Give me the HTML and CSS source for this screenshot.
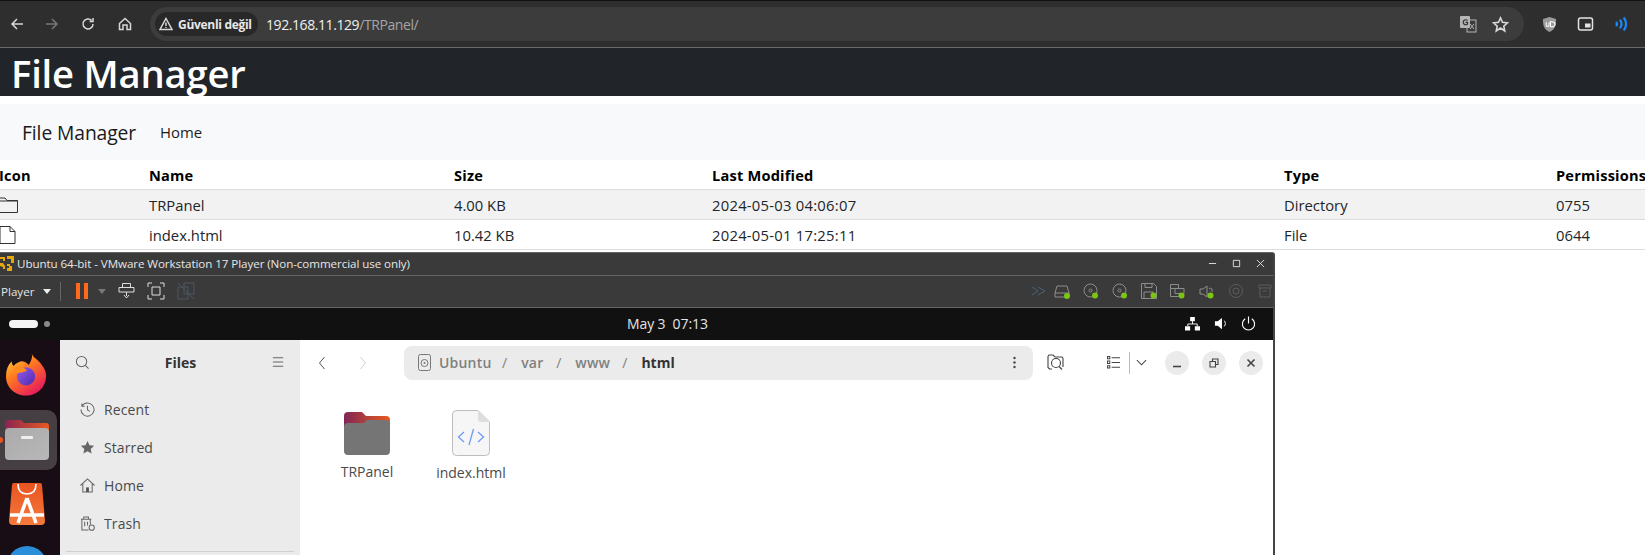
FILE: index.html
```html
<!DOCTYPE html>
<html lang="tr">
<head>
<meta charset="utf-8">
<title>File Manager</title>
<link rel="stylesheet" href="styles.css">
</head>
<body>
<div class="screen">
  <header class="chrome">
    <svg class="nav-icon first" viewBox="0 0 16 16"><path d="M14 8H3M8 3 3 8l5 5" class="st-light"/></svg>
    <svg class="nav-icon gap-a" viewBox="0 0 16 16"><path d="M2 8h11M8 3l5 5-5 5" class="st-dim"/></svg>
    <svg class="nav-icon gap-b" viewBox="0 0 16 16"><path d="M13 8a5 5 0 1 1-1.500-3.600M13 2v3.400H9.600" class="st-light"/></svg>
    <svg class="nav-icon gap-c" viewBox="0 0 16 16"><path d="M2.500 7.500 8 2.500l5.500 5v6H10V9H6v4.500H2.500z" class="st-light"/></svg>
    <div class="omnibox">
      <div class="chip">
        <svg class="warn" viewBox="0 0 14 14"><path d="M7 1.500 13 12.500H1zM7 5.500v3.500M7 10v1" class="st-light"/></svg>
        <span>Güvenli değil</span>
      </div>
      <div class="url"><span class="url-host">192.168.11.129</span>/TRPanel/</div>
      <svg class="translate" viewBox="0 0 18 18"><rect x="8" y="5" width="9" height="12" fill="none" stroke="#b5b5b5"/><rect x="1" y="1" width="10" height="12" rx="1" fill="#b5b5b5"/><path d="M8.500 5.500A2.500 2.500 0 1 0 8.500 9V7.300H6.500" fill="none" stroke="#333" stroke-width="1.200"/><path d="m11 9 4 5m0-5-4 5" stroke="#b5b5b5"/></svg>
      <svg class="star" viewBox="0 0 16 16"><path d="m8 1.800 1.900 4.200 4.600.5-3.400 3.100.9 4.500L8 11.300l-4 2.800.9-4.500L1.500 6.500 6.100 6z" class="st-light"/></svg>
    </div>
    <svg class="ext ublock" viewBox="0 0 16 18"><path d="M8 1 15 3c0 7-1 11-7 14C2 14 1 10 1 3z" fill="#9a9a9a"/><path d="M4.500 6.500v3a1.500 1.500 0 0 0 3 0v-3M9 6h1.500a2.500 2 0 0 1 0 5.500H9z" fill="none" stroke="#fff" stroke-width="1.100"/></svg>
    <svg class="ext pip" viewBox="0 0 16 16"><rect x="1" y="2" width="14" height="12" rx="2" fill="none" stroke="#e3e3e3" stroke-width="1.500"/><rect x="7.500" y="7.500" width="5.500" height="4" fill="#e3e3e3"/></svg>
    <svg class="ext wifi" viewBox="0 0 14 14"><path d="M2 5c1 1.300 1 2.700 0 4M5.500 3c2 2.500 2 5.500 0 8M9 1c3 3.500 3 8.500 0 12" fill="none" stroke="#1a8cff" stroke-width="2"/></svg>
  </header>

  <div class="banner"><h1>File Manager</h1></div>

  <nav class="navbar">
    <span class="brand">File Manager</span>
    <span class="nav-link">Home</span>
  </nav>

  <table class="files">
    <colgroup><col class="c1"><col class="c2"><col class="c3"><col class="c4"><col class="c5"><col class="c6"></colgroup>
    <thead>
      <tr><th>Icon</th><th>Name</th><th>Size</th><th>Last Modified</th><th>Type</th><th>Permissions</th></tr>
    </thead>
    <tbody>
      <tr class="odd">
        <td><svg class="row-icon" viewBox="0 0 20 18"><path d="M-1 2h7l2 2.500h10.500V16.500H-1zM-1 5h19.500" fill="none" stroke="#333" stroke-width="1"/></svg></td>
        <td>TRPanel</td><td>4.00 KB</td><td class="stamp">2024-05-03 04:06:07</td><td>Directory</td><td>0755</td>
      </tr>
      <tr>
        <td><svg class="row-icon" viewBox="0 0 20 18"><path d="M1 .5h10l5 5v12H1zM11 .5v5h5" fill="none" stroke="#333" stroke-width="1"/></svg></td>
        <td>index.html</td><td>10.42 KB</td><td class="stamp">2024-05-01 17:25:11</td><td>File</td><td>0644</td>
      </tr>
    </tbody>
  </table>

  <section class="vm">
    <div class="vm-title">
      <svg class="vm-logo" viewBox="0 0 14 16"><path d="M0 1h5v4H3V3H0zM7 0h7v7h-3V3H7zM0 7h3l2 3v3H3v-2L0 10zM7 8h3v2h2v5H7v-3h2v-2H7z" fill="#e8a80c"/></svg>
      <span class="vm-name">Ubuntu 64-bit - VMware Workstation 17 Player (Non-commercial use only)</span>
      <svg class="win-btn" viewBox="0 0 10 10"><path d="M1 5h8" class="st-win"/></svg>
      <svg class="win-btn" viewBox="0 0 10 10"><path d="M1.500 1.500h7v7h-7z" class="st-win"/></svg>
      <svg class="win-btn" viewBox="0 0 10 10"><path d="m1 1 8 8m0-8-8 8" class="st-win"/></svg>
    </div>
    <div class="vm-tools">
      <span class="player">Player</span>
      <span class="caret light"></span>
      <span class="tool-sep"></span>
      <span class="pause"><i></i><i></i></span>
      <span class="caret dim"></span>
      <svg class="tool t-send" viewBox="0 0 18 18"><path d="M4.500 1.500h8v4h-8zM1 5.500h15v4.500H1zM8.500 10v4M6 13l2.500 3 2.500-3" fill="none" stroke="#ddd" stroke-width="1"/></svg>
      <svg class="tool t-full" viewBox="0 0 18 18"><path d="M1 5V1h4M13 1h4v4M17 13v4h-4M5 17H1v-4M5 5h8v8H5z" fill="none" stroke="#ddd" stroke-width="1"/></svg>
      <svg class="tool t-unity" viewBox="0 0 18 18"><path d="M1 5h10v12H1zM7 1h10v11H7zM1 1l16 16" fill="none" stroke="#4b5660" stroke-width="1"/></svg>
      <svg class="dev d-more" viewBox="0 0 16 10"><path d="m1 1 6 4-6 4M7 1l7 4-7 4" fill="none" stroke="#46627a"/></svg>
      <span class="dev-wrap"><svg class="dev" viewBox="0 0 16 16"><path d="M3 3h10l2 7v4H1v-4zM1 10h14" class="st-dev"/><circle class="led" cx="13" cy="13" r="3"/></svg></span>
      <span class="dev-wrap"><svg class="dev" viewBox="0 0 16 16"><circle cx="7.500" cy="7.500" r="6.500" class="st-dev"/><circle cx="7.500" cy="7.500" r="1.500" class="st-dev"/><circle class="led" cx="12" cy="12.500" r="3"/></svg></span>
      <span class="dev-wrap"><svg class="dev" viewBox="0 0 16 16"><circle cx="7.500" cy="7.500" r="6.500" class="st-dev"/><circle cx="7.500" cy="7.500" r="1.500" class="st-dev"/><circle class="led" cx="12" cy="12.500" r="3"/></svg></span>
      <span class="dev-wrap"><svg class="dev" viewBox="0 0 16 16"><path d="M.5.500h12l3 3v12H.5zM4 .5v4h7v-4M3 15.500V9h9v6.500" class="st-dev"/><circle class="led" cx="12.500" cy="12.500" r="3"/></svg></span>
      <span class="dev-wrap"><svg class="dev" viewBox="0 0 16 16"><path d="M.5 1.500h8v4h-8zM5 5.500h9v5H5zM.5 5.500v8h8" class="st-dev"/><circle class="led" cx="11.500" cy="12.500" r="3"/></svg></span>
      <span class="dev-wrap"><svg class="dev" viewBox="0 0 16 16"><path d="M1 6h3l4-3v11l-4-3H1zM10 6a2 2 0 0 1 3 0v3" class="st-dev"/><circle class="led" cx="11.500" cy="12.500" r="3"/></svg></span>
      <span class="dev-wrap"><svg class="dev" viewBox="0 0 16 16"><circle cx="8" cy="8" r="6.500" class="st-off"/><circle cx="8" cy="8" r="3" class="st-off"/></svg></span>
      <span class="dev-wrap"><svg class="dev" viewBox="0 0 16 16"><path d="M2 2h12v3H2zM3 5v9h10V5M6 8h4" class="st-off"/></svg></span>
    </div>
    <div class="guest-bar">
      <div class="activities"><span class="pill"></span><span class="dot"></span></div>
      <div class="clock">May 3&nbsp; 07:13</div>
      <div class="tray">
        <svg class="tray-icon" viewBox="0 0 16 16"><path d="M5.500 1h5v4.500h-5zM0 11h5.500v4.500H0zM10.500 11H16v4.500h-5.500z" fill="#fff"/><path d="M8 5.500V8.500M3 11V8.500h10V11" fill="none" stroke="#fff"/></svg>
        <svg class="tray-icon vol" viewBox="0 0 16 16"><path d="M1 5.500h3L8.500 2v12L4 10.500H1z" fill="#fff"/><path d="M11 5c1.500 2 1.500 4 0 6" fill="none" stroke="#fff"/></svg>
        <svg class="tray-icon pow" viewBox="0 0 16 16"><path d="M4.500 3a6.500 6.500 0 1 0 7 0M8 .5V8" fill="none" stroke="#fff" stroke-width="1.200"/></svg>
      </div>
    </div>
    <div class="desktop">
      <aside class="dock">
        <svg class="fox" viewBox="0 0 44 44">
          <defs>
            <linearGradient id="foxA" x1="0" y1="0" x2=".7" y2="1"><stop offset="0" stop-color="#ffe040"/><stop offset=".45" stop-color="#ff7a1f"/><stop offset="1" stop-color="#e6195e"/></linearGradient>
            <linearGradient id="foxB" x1="0" y1="0" x2="1" y2="1"><stop offset="0" stop-color="#9a5be8"/><stop offset="1" stop-color="#4a2bb5"/></linearGradient>
          </defs>
          <path d="M27 0c1 4 5 5 9 10 3 4 6 8 6 13 0 12-9 21-21 21C9 44 0 35 0 24 0 17 2 12 6 8c0 3 1 4 2 5 2-3 5-4 8-5 3 0 5 1 8 4 2-4 4-7 3-12z" fill="url(#foxA)"/>
          <circle cx="21" cy="24" r="9.500" fill="url(#foxB)"/>
          <path d="M9 15c5-2 10-1 13 3l-5 2c-4 0-6 1-7 3-1-3-1-5-1-8z" fill="#ff8a1f"/>
        </svg>
        <div class="dock-active">
          <span class="run-dot"></span>
          <svg class="dock-folder" viewBox="0 0 44 40">
            <defs>
              <linearGradient id="tabA" x1="0" y1="0" x2="1" y2="0"><stop offset="0" stop-color="#8c2452"/><stop offset="1" stop-color="#e95a20"/></linearGradient>
              <linearGradient id="bodyA" x1="0" y1="0" x2="1" y2="1"><stop offset="0" stop-color="#aaa"/><stop offset="1" stop-color="#b8b8b8"/></linearGradient>
            </defs>
            <path d="M3 0h13l3 3h22a3 3 0 0 1 3 3v10H0V3a3 3 0 0 1 3-3z" fill="url(#tabA)"/>
            <rect y="8" width="44" height="32" rx="4" fill="url(#bodyA)"/>
            <rect x="16" y="16" width="12" height="3" rx="1" fill="#eee"/>
          </svg>
        </div>
        <svg class="store" viewBox="0 0 36 42">
          <defs><linearGradient id="storeA" x1="0" y1="0" x2="0" y2="1"><stop offset="0" stop-color="#e95420"/><stop offset="1" stop-color="#f47a3c"/></linearGradient></defs>
          <path d="M5 0h26a2 2 0 0 1 2 2l3 36a4 4 0 0 1-4 4H4a4 4 0 0 1-4-4L3 2a2 2 0 0 1 2-2z" fill="url(#storeA)"/>
          <path d="M9 1c0 7 4 10 9 10s9-3 9-10" fill="none" stroke="#fff" stroke-width="1.600"/>
          <path d="M18 15 9 40M18 15l9 25M1 32h34" fill="none" stroke="#fff" stroke-width="3.500"/>
        </svg>
        <div class="dock-blue"></div>
      </aside>
      <aside class="sidebar">
        <div class="side-head">
          <svg class="s-icon" viewBox="0 0 16 16"><circle cx="7" cy="7" r="5.500" class="st-grey"/><path d="m11 11 3.500 3.500" class="st-grey"/></svg>
          <span class="side-title">Files</span>
          <svg class="s-icon" viewBox="0 0 16 16"><path d="M2 3h11M2 7.500h11M2 12h11" class="st-grey"/></svg>
        </div>
        <ul class="places">
          <li><svg class="p-icon" viewBox="0 0 16 16"><path d="M2 4.500A7 7 0 1 1 1 8M2 1.500v3h3M8 4v4.500l2.500 1.500" class="st-grey"/></svg>Recent</li>
          <li><svg class="p-icon" viewBox="0 0 16 16"><path d="m8 1 2.100 4.700 5 .5-3.700 3.300 1 5L8 12l-4.400 2.500 1-5L.9 6.200l5-.5z" fill="#666"/></svg>Starred</li>
          <li><svg class="p-icon" viewBox="0 0 16 16"><path d="M.5 8 8 1l7.500 7M3 6.500v8.500h10V6.500" class="st-grey"/><path d="M6.500 10h3v5h-3z" fill="#555"/></svg>Home</li>
          <li><svg class="p-icon" viewBox="0 0 16 16"><path d="M1 3.500h11M4 3.500V1h5v2.500M2 3.500V15h7M11 3.500V9M5 6v5M8 6v4" class="st-grey"/><circle cx="12.500" cy="12.500" r="2.800" class="st-grey"/></svg>Trash</li>
        </ul>
        <hr class="side-rule">
      </aside>
      <main class="browser">
        <div class="f-head">
          <svg class="chev back" viewBox="0 0 8 16"><path d="M6.500 2 1.500 8l5 6" fill="none" stroke="#555"/></svg>
          <svg class="chev fwd" viewBox="0 0 8 16"><path d="m1.500 2 5 6-5 6" fill="none" stroke="#d0d0d0"/></svg>
          <div class="pathbar">
            <svg class="disk" viewBox="0 0 13 17"><rect x=".5" y=".5" width="12" height="16" rx="2" fill="none" stroke="#777"/><circle cx="6.500" cy="9" r="3.500" fill="none" stroke="#777"/><circle cx="6.500" cy="9" r="1" fill="#777"/></svg>
            <span class="crumb c-ubuntu">Ubuntu</span><span class="slash">/</span>
            <span class="crumb c-var">var</span><span class="slash">/</span>
            <span class="crumb c-www">www</span><span class="slash">/</span>
            <span class="crumb now">html</span>
            <svg class="kebab" viewBox="0 0 3 13"><circle cx="1.500" cy="2" r="1.200" fill="#444"/><circle cx="1.500" cy="6.500" r="1.200" fill="#444"/><circle cx="1.500" cy="11" r="1.200" fill="#444"/></svg>
          </div>
          <svg class="h-ic search-folder" viewBox="0 0 17 17"><path d="M5 15H2.500L1 13.500V2.500L2 1h4l2 2h7l1 1.500V13" class="st-dark"/><circle cx="9" cy="9" r="4.500" class="st-dark"/><path d="m12 12.500 3 3" class="st-dark"/></svg>
          <svg class="h-ic list-view" viewBox="0 0 14 14"><path d="M5 2h9M5 7h9M5 12h9M.5.500h2.500v2.500H.5zM.5 5.500h2.500V8H.5zM.5 10.500h2.500V13H.5z" class="st-dark"/></svg>
          <span class="h-sep"></span>
          <svg class="h-ic down" viewBox="0 0 12 7"><path d="m1 1 5 5 5-5" class="st-dark"/></svg>
          <span class="round r-first"><svg class="r-ic" viewBox="0 0 10 10"><path d="M1 8.500h8" class="st-heavy"/></svg></span>
          <span class="round"><svg class="r-ic" viewBox="0 0 10 10"><path d="M1 3.500h5.500V9H1zM3.500 3.500V1H9v5.500H6.500" class="st-dark"/></svg></span>
          <span class="round"><svg class="r-ic" viewBox="0 0 10 10"><path d="m1.500 1.500 7 7m0-7-7 7" class="st-heavy"/></svg></span>
        </div>
        <div class="grid">
          <figure class="item">
            <svg class="big-folder" viewBox="0 0 46 43">
              <defs><linearGradient id="tabB" x1="0" y1="0" x2="1" y2="0"><stop offset="0" stop-color="#7f2755"/><stop offset="1" stop-color="#e95a20"/></linearGradient></defs>
              <path d="M4 0h14l4 4h20a4 4 0 0 1 4 4v14H0V4a4 4 0 0 1 4-4z" fill="url(#tabB)"/>
              <path d="M4 11h16l3-3h19a4 4 0 0 1 4 4v27a4 4 0 0 1-4 4H4a4 4 0 0 1-4-4V15a4 4 0 0 1 4-4z" fill="#757575"/>
            </svg>
            <figcaption>TRPanel</figcaption>
          </figure>
          <figure class="item">
            <svg class="big-file" viewBox="0 0 38 46">
              <path d="M4 .5h22L37.500 12v29.500a4 4 0 0 1-4 4H4.500a4 4 0 0 1-4-4V4a4 4 0 0 1 4-3.500z" fill="#f6f6f6" stroke="#bdbdbd"/>
              <path d="M26 .5V9a3 3 0 0 0 3 3h8.500z" fill="#dedede"/>
              <path d="m12 22-5.500 5 5.500 5M26 22l5.500 5-5.500 5M21.500 19l-4.500 16" fill="none" stroke="#6e9bf5" stroke-width="1.300"/>
            </svg>
            <figcaption>index.html</figcaption>
          </figure>
        </div>
      </main>
    </div>
  </section>
</div>
</body>
</html>
```
FILE: styles.css
```css
* { box-sizing: border-box; }
html, body { margin: 0; padding: 0; background: #fff; }
.screen { width: 1645px; height: 555px; overflow: hidden; font-family: "Open Sans", "Noto Sans", sans-serif; color: #000; }

.st-light { fill: none; stroke: #d8d8d8; stroke-width: 1.500; }
.st-dim { fill: none; stroke: #777; stroke-width: 1.500; }
.st-win { fill: none; stroke: #e6e6e6; stroke-width: 1; }
.st-dev { fill: none; stroke: #8d8d8d; stroke-width: 1; }
.st-off { fill: none; stroke: #5c5c5c; stroke-width: 1; }
.st-grey { fill: none; stroke: #666; stroke-width: 1.100; }
.st-dark { fill: none; stroke: #444; stroke-width: 1.100; }
.st-heavy { fill: none; stroke: #444; stroke-width: 1.600; }
.led { fill: #7cc412; stroke: none; }

/* browser chrome */
.chrome { height: 48px; background: #2e2e2e; border-top: 1px solid #111; border-bottom: 1px solid #6a6a6a; display: flex; align-items: center; flex: none; }
.nav-icon { width: 16px; height: 16px; flex: none; }
.first { margin-left: 9px; }
.gap-a { margin-left: 19px; }
.gap-b { margin-left: 20px; }
.gap-c { margin-left: 21px; }
.omnibox { margin-left: 17px; width: 1374px; height: 34px; border-radius: 17px; background: #3c3c3c; display: flex; align-items: center; flex: none; }
.chip { margin-left: 5px; width: 103px; height: 24px; border-radius: 12px; background: #282828; display: flex; align-items: center; color: #e8e8e8; font: 700 12px "Open Sans", sans-serif; letter-spacing: -.3px; white-space: nowrap; flex: none; }
.warn { width: 14px; height: 14px; margin: 0 5px 0 4px; flex: none; }
.url { margin-left: 8px; font-size: 14px; color: #a5a5a5; letter-spacing: -.42px; flex: 1; white-space: nowrap; }
.url-host { color: #f0f0f0; }
.translate { width: 18px; height: 18px; flex: none; }
.star { width: 17px; height: 17px; margin: 0 15px 0 15px; flex: none; }
.ext { flex: none; }
.ublock { width: 15px; height: 17px; margin-left: 18px; }
.pip { width: 17px; height: 16px; margin-left: 20px; }
.wifi { width: 15px; height: 16px; margin-left: 20px; }

/* banner and navbar */
.banner { height: 48px; background: #212529; padding-left: 11px; overflow: hidden; }
h1 { margin: 0; font-size: 38.200px; line-height: 50px; font-weight: 600; color: #fff; white-space: nowrap; letter-spacing: -.2px; }
.navbar { height: 56px; margin-top: 8px; background: #f8f9fa; display: flex; align-items: center; padding-left: 22px; }
.brand { font-size: 19.300px; color: #1a1a1a; letter-spacing: -.1px; }
.nav-link { margin-left: 24px; font-size: 14.900px; color: #1c1c1c; }

/* table */
.files { border-collapse: collapse; table-layout: fixed; width: 1660px; margin-left: -1px; font-size: 14.800px; }
.c1 { width: 150px; } .c2 { width: 305px; } .c3 { width: 258px; } .c4 { width: 572px; } .c5 { width: 272px; } .c6 { width: 103px; }
.files th { height: 29px; padding: 2px 0 0; text-align: left; font-size: 14.600px; font-weight: 700; letter-spacing: .2px; border-bottom: 1px solid #dcdcdc; white-space: nowrap; }
.files td { height: 30px; padding: 1px 0 0; border-bottom: 1px solid #dcdcdc; color: #212529; white-space: nowrap; }
.files td.stamp { letter-spacing: .25px; }
.odd td { background: #f2f2f2; }
.row-icon { display: block; width: 20px; height: 18px; overflow: visible; }

/* VMware window */
.vm { width: 1275px; margin-top: 2px; height: 304px; background: #3a3a3a; border-top: 1px solid #666; border-right: 2px solid #444; display: flex; flex-direction: column; overflow: hidden; border-top-right-radius: 3px; }
.vm-title { height: 23px; display: flex; align-items: center; border-bottom: 1px solid #666; flex: none; }
.vm-logo { width: 14px; height: 16px; flex: none; }
.vm-name { margin-left: 3px; flex: 1; font: 11.600px "Open Sans", sans-serif; color: #e6e6e6; letter-spacing: -.07px; white-space: nowrap; }
.win-btn { width: 9px; height: 9px; margin-right: 15px; flex: none; }
.win-btn:last-child { margin-right: 8px; }
.vm-tools { height: 32px; display: flex; align-items: center; border-bottom: 1px solid #666; flex: none; }
.player { margin-left: 1px; font: 11.600px "Open Sans", sans-serif; color: #e6e6e6; }
.caret { width: 0; height: 0; border: 4px solid transparent; border-top: 5px solid #eee; border-bottom: 0; flex: none; }
.caret.light { margin-left: 9px; }
.caret.dim { margin-left: 10px; border-top-color: #777; }
.tool-sep { width: 1px; height: 19px; background: #666; margin-left: 9px; }
.pause { margin-left: 15px; display: flex; gap: 4px; }
.pause i { display: block; width: 4px; height: 16px; background: #ff6a20; }
.tool { width: 18px; height: 18px; flex: none; }
.t-send { margin-left: 12px; }
.t-full { margin-left: 11px; }
.t-unity { margin-left: 12px; }
.d-more { width: 14px; height: 10px; margin-left: 836px; flex: none; }
.dev-wrap { margin-left: 13px; display: flex; }
.d-more + .dev-wrap { margin-left: 7px; }
.dev { width: 16px; height: 16px; }

/* guest */
.guest-bar { height: 32px; background: #111; display: grid; grid-template-columns: 627px auto 1fr; align-items: center; flex: none; }
.activities { display: flex; align-items: center; padding-left: 9px; gap: 6px; }
.pill { width: 29px; height: 8px; border-radius: 4px; background: #f4f4f4; }
.dot { width: 6px; height: 6px; border-radius: 3px; background: #8a8a8a; }
.clock { font-size: 14px; color: #e4e4e4; letter-spacing: -.1px; }
.tray { display: flex; justify-content: flex-end; align-items: center; padding-right: 17px; }
.tray-icon { width: 15px; height: 15px; flex: none; }
.vol { margin-left: 14px; }
.pow { margin-left: 12px; }

.desktop { flex: 1; display: flex; min-height: 0; }
.dock { width: 60px; flex: none; background: #180c15; display: flex; flex-direction: column; align-items: flex-start; overflow: hidden; }
.fox { width: 42px; height: 43px; margin: 13px 0 0 6px; flex: none; }
.dock-active { width: 57px; height: 60px; margin-top: 14px; border-radius: 0 10px 10px 0; background: #453e43; display: flex; align-items: center; flex: none; }
.run-dot { width: 3px; height: 6px; border-radius: 0 3px 3px 0; background: #e95420; flex: none; }
.dock-folder { width: 44px; height: 40px; margin-left: 2px; flex: none; }
.store { width: 36px; height: 42px; margin: 13px 0 0 9px; flex: none; }
.dock-blue { width: 40px; height: 40px; border-radius: 50%; background: #2a8fd8; margin: 21px 0 0 7px; flex: none; }

.sidebar { width: 240px; flex: none; background: #ebebeb; padding: 14px 6px 0; font-family: "Open Sans", sans-serif; color: #4a4a4a; }
.side-head { display: flex; align-items: center; justify-content: space-between; height: 18px; padding: 0 8px 0 9px; }
.s-icon { width: 15px; height: 15px; flex: none; }
.side-title { font-size: 14px; font-weight: 700; color: #333; }
.places { list-style: none; margin: 19px 0 0; padding: 0; }
.places li { height: 38px; display: flex; align-items: center; padding-left: 14px; font-size: 14px; letter-spacing: .1px; }
.p-icon { width: 15px; height: 15px; margin-right: 9px; flex: none; }
.side-rule { margin: 8px 0 0; border: 0; border-top: 1px solid #cfcfcf; }

.browser { flex: 1; background: #fff; min-width: 0; font-family: "Open Sans", sans-serif; }
.f-head { height: 46px; display: flex; align-items: center; padding-top: 0; }
.chev { width: 8px; height: 16px; flex: none; }
.back { margin-left: 18px; }
.fwd { margin-left: 33px; }
.pathbar { margin-left: 37px; width: 629px; height: 34px; border-radius: 8px; background: #ebebeb; display: flex; align-items: center; font-size: 14px; font-weight: 600; color: #808080; white-space: nowrap; flex: none; }
.disk { width: 13px; height: 17px; margin-left: 14px; flex: none; }
.crumb { flex: none; }
.c-ubuntu { margin-left: 8px; width: 52px; letter-spacing: .2px; }
.c-var { width: 24px; letter-spacing: .2px; }
.c-www { width: 36px; letter-spacing: .2px; }
.slash { margin: 0 14px 0 11px; font-weight: 400; flex: none; }
.now { color: #333; font-weight: 700; }
.kebab { width: 3px; height: 13px; margin-left: auto; margin-right: 17px; flex: none; }
.h-ic { flex: none; }
.search-folder { width: 17px; height: 17px; margin-left: 14px; }
.list-view { width: 13px; height: 13px; margin-left: 43px; }
.h-sep { width: 1px; height: 22px; background: #bdbdbd; margin-left: 9px; flex: none; }
.down { width: 11px; height: 7px; margin-left: 6px; }
.round { width: 24px; height: 24px; border-radius: 50%; background: #ebebeb; display: flex; align-items: center; justify-content: center; margin-left: 13px; flex: none; }
.round.r-first { margin-left: 18px; }
.r-ic { width: 10px; height: 10px; }

.grid { display: flex; padding: 26px 0 0 23px; }
.item { margin: 0; display: flex; flex-direction: column; align-items: center; width: 88px; }
.item + .item { width: 80px; margin-left: 20px; }
.big-folder { width: 46px; height: 43px; }
.big-file { width: 38px; height: 46px; margin-top: -2px; }
figcaption { margin-top: 8px; font-size: 14px; color: #4a4a4a; line-height: 18px; white-space: nowrap; }
```
